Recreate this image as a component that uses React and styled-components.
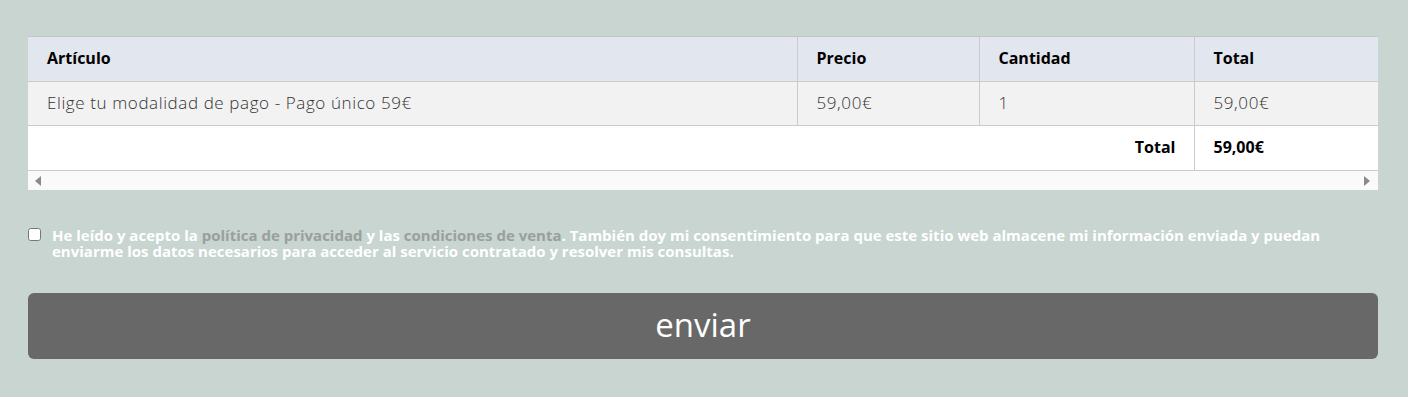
import React from "react";
import styled, { createGlobalStyle } from "styled-components";

const Global = createGlobalStyle`
  html, body { margin: 0; padding: 0; background: #c8d5d0; }
  body { font-family: "Open Sans", Lato, sans-serif; }
`;

const Page = styled.div`
  padding: 36px 30px 0 28px;
  width: 1350px;
`;

const TableWrap = styled.div`
  background: #fff;
  border-top: 1px solid #c4c4c4;
`;

const Table = styled.table`
  width: 100%;
  border-collapse: collapse;
  table-layout: fixed;
`;

const Th = styled.th`
  background: #e2e6ee;
  text-align: left;
  font-weight: 700;
  font-size: 16px;
  line-height: 20px;
  color: #000;
  height: 41px;
  padding: 0 18px 3px 19px;
  border-bottom: 1px solid #cbcbcb;
  border-left: ${(p) => (p.$first ? "none" : "1px solid #cbcbcb")};
`;

const Td = styled.td`
  background: ${(p) => (p.$foot ? "#fff" : "#f2f2f2")};
  font-size: ${(p) => (p.$bold ? "16px" : "17px")};
  line-height: 20px;
  font-weight: ${(p) => (p.$bold ? 700 : 300)};
  color: ${(p) => (p.$bold ? "#000" : "#333")};
  text-align: ${(p) => (p.$right ? "right" : "left")};
  height: ${(p) => (p.$foot ? "42px" : "41px")};
  padding: 0 18px 2px 19px;
  border-bottom: 1px solid #cbcbcb;
  border-left: ${(p) => (p.$first ? "none" : "1px solid #cbcbcb")};
  letter-spacing: ${(p) => (p.$bold ? "0" : "0.6px")};
`;

const ScrollBar = styled.div`
  height: 19px;
  background: #fafafa;
  display: flex;
  align-items: center;
  justify-content: space-between;
  padding: 0 8px 0 7px;
`;

const Arrow = styled.span`
  width: 0;
  height: 0;
  border-top: 5px solid transparent;
  border-bottom: 5px solid transparent;
  ${(p) =>
    p.$dir === "left"
      ? "border-right: 6px solid #8a8a8a;"
      : "border-left: 6px solid #8a8a8a;"}
`;

const Consent = styled.label`
  display: flex;
  align-items: flex-start;
  gap: 11px;
  margin-top: 37px;
  color: #fff;
  font-weight: 700;
  font-size: 15px;
  line-height: 16px;
`;

const Check = styled.input`
  margin: 1px 0 0 0;
  width: 13px;
  height: 13px;
  flex: none;
`;

const Link = styled.a`
  color: #9a9f9c;
  text-decoration: none;
`;

const Button = styled.button`
  display: block;
  width: 100%;
  height: 66px;
  margin-top: 34px;
  background: #686868;
  border: none;
  border-radius: 6px;
  color: #fff;
  font-family: "Open Sans", Lato, sans-serif;
  font-size: 33px;
  padding: 0 0 4px;
  cursor: pointer;
`;

export default function App() {
  return (
    <>
      <Global />
      <Page>
        <TableWrap>
          <Table>
            <colgroup>
              <col style={{ width: 769 }} />
              <col style={{ width: 182 }} />
              <col style={{ width: 215 }} />
              <col style={{ width: 184 }} />
            </colgroup>
            <thead>
              <tr>
                <Th $first>Artículo</Th>
                <Th>Precio</Th>
                <Th>Cantidad</Th>
                <Th>Total</Th>
              </tr>
            </thead>
            <tbody>
              <tr>
                <Td $first>Elige tu modalidad de pago - Pago único 59€</Td>
                <Td>59,00€</Td>
                <Td>1</Td>
                <Td>59,00€</Td>
              </tr>
              <tr>
                <Td $first $foot $bold $right colSpan={3}>
                  Total
                </Td>
                <Td $foot $bold>
                  59,00€
                </Td>
              </tr>
            </tbody>
          </Table>
          <ScrollBar>
            <Arrow $dir="left" />
            <Arrow $dir="right" />
          </ScrollBar>
        </TableWrap>
        <Consent>
          <Check type="checkbox" />
          <span>
            He leído y acepto la <Link href="#">política de privacidad</Link> y las{" "}
            <Link href="#">condiciones de venta</Link>. También doy mi consentimiento para que
            este sitio web almacene mi información enviada y puedan enviarme los datos necesarios
            para acceder al servicio contratado y resolver mis consultas.
          </span>
        </Consent>
        <Button>enviar</Button>
      </Page>
    </>
  );
}
